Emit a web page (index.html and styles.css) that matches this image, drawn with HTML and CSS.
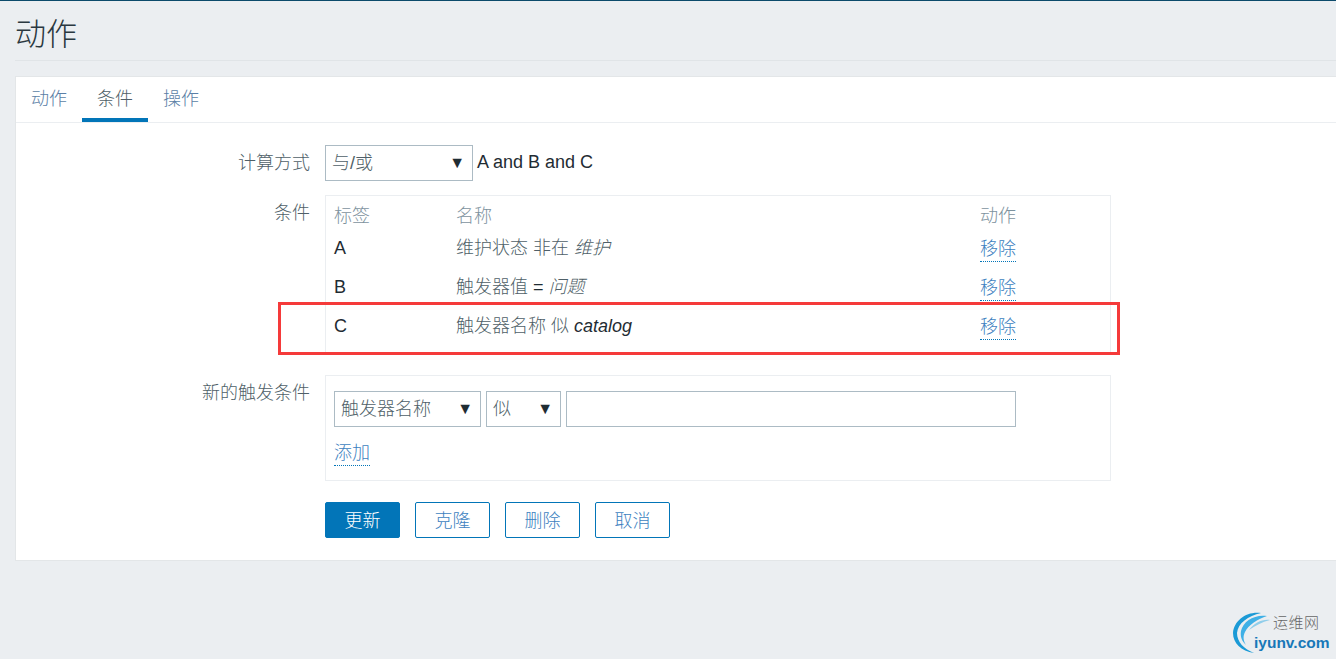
FILE: index.html
```html
<!DOCTYPE html>
<html lang="zh">
<head>
<meta charset="utf-8">
<title>动作</title>
<link rel="stylesheet" href="styles.css">
</head>
<body>
<header class="page-head"><h1>动作</h1></header>
<main class="card">
  <nav class="tabs">
    <a class="tab">动作</a>
    <a class="tab active">条件</a>
    <a class="tab">操作</a>
  </nav>
  <form class="form">
    <div class="row row-calc">
      <label class="label">计算方式</label>
      <div class="inline">
        <div class="select sel-calc"><span>与/或</span><i>▼</i></div>
        <span class="formula">A and B and C</span>
      </div>
    </div>
    <div class="row row-cond">
      <label class="label">条件</label>
      <div class="box cond-box">
        <div class="cond-row head"><span>标签</span><span>名称</span><span>动作</span></div>
        <div class="cond-row"><span class="tag">A</span><span class="name">维护状态 非在 <em>维护</em></span><span><a class="link">移除</a></span></div>
        <div class="cond-row"><span class="tag">B</span><span class="name">触发器值 <b class="eq">=</b> <em>问题</em></span><span><a class="link">移除</a></span></div>
        <div class="cond-row"><span class="tag">C</span><span class="name">触发器名称 似 <em class="dark">catalog</em></span><span><a class="link">移除</a></span></div>
      </div>
    </div>
    <div class="row row-new">
      <label class="label">新的触发条件</label>
      <div class="box new-box">
        <div class="inline gap5">
          <div class="select sel-type"><span>触发器名称</span><i>▼</i></div>
          <div class="select sel-op"><span>似</span><i>▼</i></div>
          <div class="text-input"></div>
        </div>
        <a class="link add">添加</a>
      </div>
    </div>
    <div class="row row-btn">
      <span class="label"></span>
      <div class="buttons">
        <button type="button" class="btn primary">更新</button>
        <button type="button" class="btn">克隆</button>
        <button type="button" class="btn">删除</button>
        <button type="button" class="btn">取消</button>
      </div>
    </div>
  </form>
</main>
<div class="highlight"></div>
<div class="watermark">
  <svg class="wm-logo" width="44" height="42" viewBox="0 0 44 42" aria-hidden="true">
    <path d="M28 1C14 -1 1 8 0 21C0 31 8 39 21 41C11 37 4 30 4 21C5 11 15 4 28 1Z" fill="#1b9ad6"/>
    <path d="M34 4C22 2 10 9 8 19C7 25 9 29 13 33C10 28 10 24 12 20C15 13 25 7 34 4Z" fill="#3fb0e6"/>
    <path d="M37 8C29 7 21 11 16 18C22 14 29 10 37 8Z" fill="#8fcdea"/>
  </svg>
  <div class="wm-cn">运维网</div>
  <div class="wm-en">iyunv.com</div>
</div>
</body>
</html>
```
FILE: styles.css
```css
* { box-sizing: border-box; }
html, body { margin: 0; height: 659px; overflow: hidden; }
body {
  position: relative;
  background: #ebeef1;
  border-top: 1px solid #0b4a6b;
  font-family: "Liberation Sans", "Noto Sans CJK SC", sans-serif;
  font-size: 18px;
  color: #4f5f68;
  font-weight: 300;
}
.page-head {
  height: 60px;
  margin-left: 15px;
  border-bottom: 1px solid #e0e4e7;
}
.page-head h1 {
  margin: 0;
  font-size: 31px;
  line-height: 67px;
  font-weight: 300;
  color: #2a3840;
}
.card {
  margin-top: 15px;
  margin-left: 15px;
  height: 485px;
  background: #fff;
  border: 1px solid #e3e6e8;
  border-right: 0;
}
.tabs {
  display: flex;
  height: 46px;
  border-bottom: 1px solid #ebeef1;
}
.tab {
  width: 66px;
  padding-top: 10px;
  line-height: 24px;
  text-align: center;
  color: #5b7fa6;
}
.tab.active {
  color: #4f5f68;
  border-bottom: 4px solid #0275b8;
  height: 45px;
}
.form { display: block; }
.row { display: flex; }
.label {
  width: 294px;
  flex: none;
  margin-right: 15px;
  text-align: right;
  line-height: 24px;
  color: #4f5f68;
}
.row-calc { margin-top: 22px; height: 36px; }
.row-calc .label { padding-top: 6px; }
.row-cond { margin-top: 14px; }
.row-cond .label { padding-top: 6px; }
.row-new { margin-top: 22px; }
.row-new .label { padding-top: 6px; }
.row-btn { margin-top: 21px; }
.inline { display: flex; align-items: center; }
.gap5 { gap: 5px; }
.formula { margin: 0 0 2px 4px; color: #1f2c33; font-weight: 400; }
.select {
  display: flex;
  align-items: center;
  justify-content: space-between;
  height: 36px;
  padding: 0 7px 0 6px;
  border: 1px solid #acbbc4;
  background: #fff;
  color: #4f5f68;
}
.select span { margin-bottom: 5px; }
.select i { font-style: normal; font-size: 16px; line-height: 20px; color: #1f2c33; font-family: "DejaVu Sans", sans-serif; }
.sel-calc { width: 148px; }
.sel-type { width: 147px; }
.sel-op { width: 75px; }
.text-input { width: 450px; height: 36px; border: 1px solid #acbbc4; background: #fff; }
.box { width: 786px; border: 1px solid #ebeef1; }
.cond-box { height: 158px; padding: 7px 0 0 8px; }
.cond-row {
  display: grid;
  grid-template-columns: 122px 524px 80px;
  height: 39px;
  line-height: 26px;
}
.cond-row.head { height: 33px; line-height: 26px; color: #7d929e; }
.tag, .name { line-height: 24px; }
.tag, .eq, .dark { color: #1f2c33; font-weight: 400; }
em { color: #4f5f68; }
.link {
  display: inline-block;
  height: 25px;
  line-height: 24px;
  color: #3d7fc0;
  border-bottom: 1px dotted #0275b8;
}
.new-box { height: 106px; padding: 15px 0 0 8px; }
.add { margin-top: 14px; }
.buttons { display: flex; gap: 15px; }
.btn {
  width: 75px;
  height: 36px;
  padding: 0 0 3px;
  font: inherit;
  color: #3d7fc0;
  background: #fff;
  border: 1px solid #0275b8;
  border-radius: 2px;
}
.btn.primary { background: #0275b8; color: #fff; }
.highlight {
  position: absolute;
  left: 278px;
  top: 301px;
  width: 842px;
  height: 53px;
  border: 3px solid #f53a3a;
}
.watermark {
  position: absolute;
  left: 1233px;
  top: 611px;
  width: 103px;
  height: 48px;
}
.wm-logo { position: absolute; left: 0; top: 0; }
.wm-cn {
  position: absolute;
  left: 40px;
  top: 2px;
  font-size: 15px;
  line-height: 18px;
  color: #666;
  letter-spacing: 0.5px;
}
.wm-en {
  position: absolute;
  left: 21px;
  top: 22px;
  font-size: 15.5px;
  line-height: 18px;
  font-weight: 700;
  color: #1878b8;
  white-space: nowrap;
}
```
